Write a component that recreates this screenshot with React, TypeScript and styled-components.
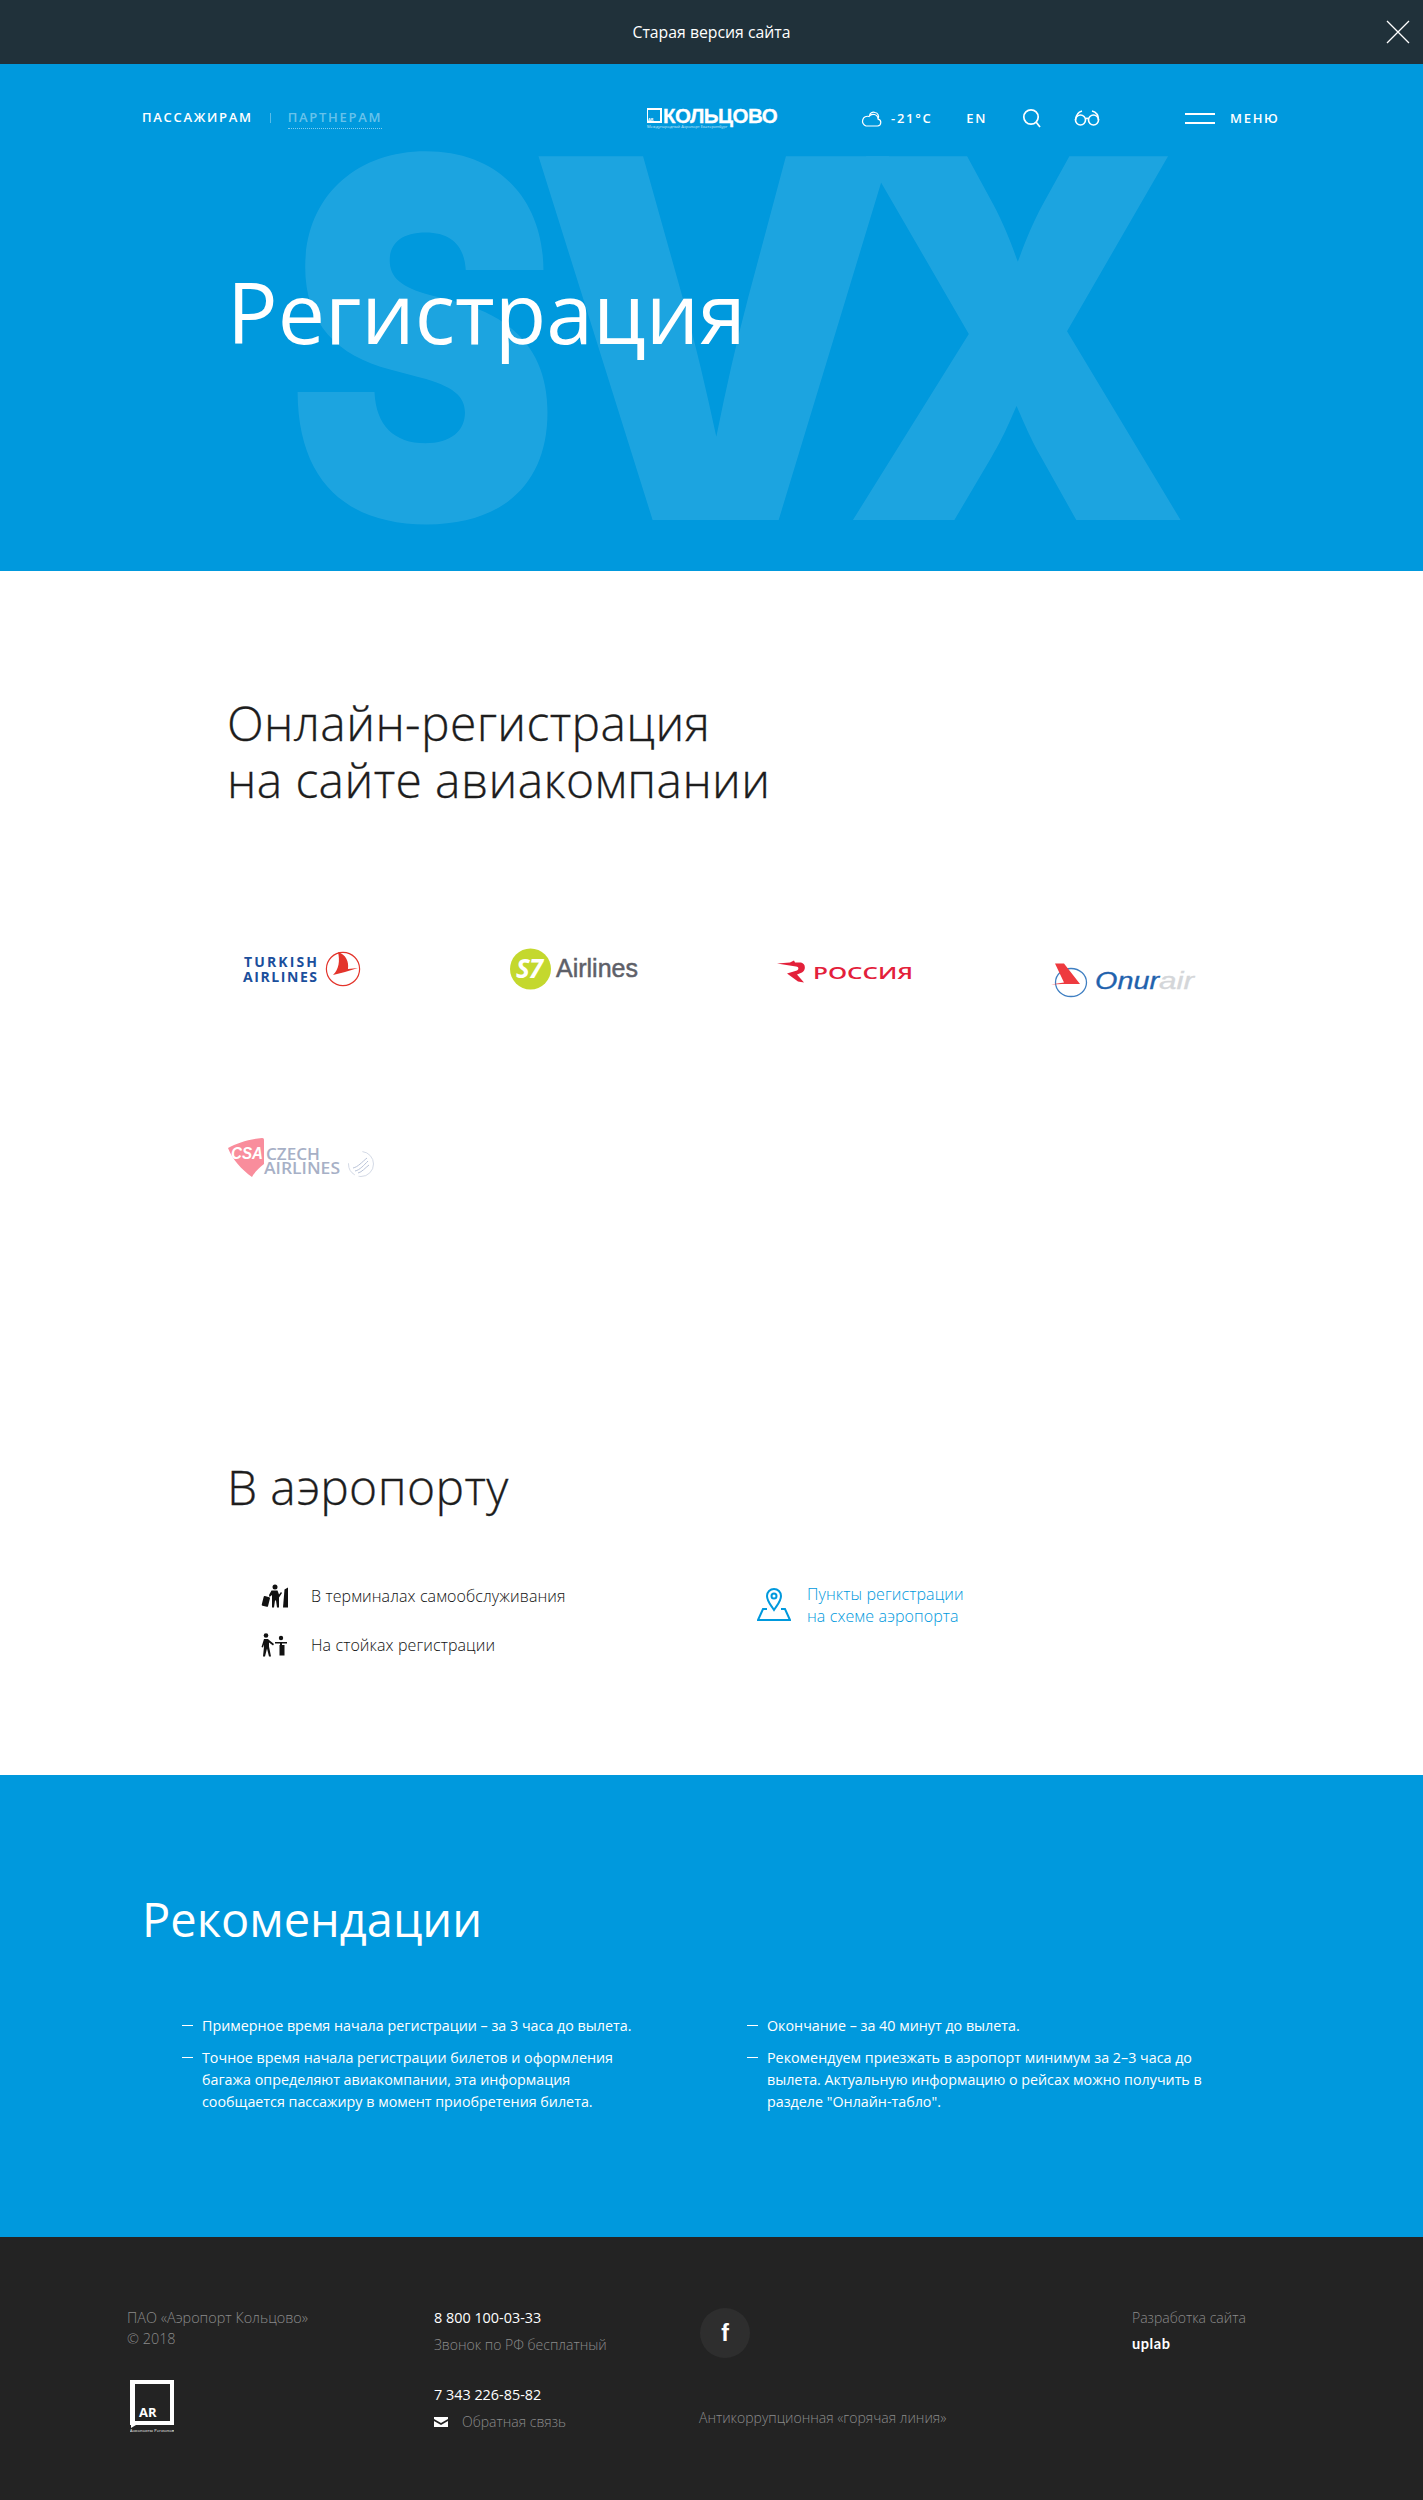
import React from "react";
import styled, { createGlobalStyle } from "styled-components";

const Global = createGlobalStyle`
  html, body { margin: 0; padding: 0; background: #fff; }
  body { font-family: "Open Sans", "Noto Sans", sans-serif; color: #1f1f1f; }
  * { box-sizing: border-box; }
`;

const Page = styled.div`
  width: 1423px;
  height: 2500px;
  overflow: hidden;
`;

const TopBar = styled.div`
  position: relative;
  height: 64px;
  background: #20313a;
  display: flex;
  align-items: center;
  justify-content: center;
  color: #fff;
  font-size: 15.8px;
  font-weight: 400;
`;

const CloseButton = styled.svg`
  position: absolute;
  right: 13px;
  top: 20px;
  width: 24px;
  height: 24px;
`;

const Hero = styled.section`
  position: relative;
  height: 507px;
  background: #0099dd;
  overflow: hidden;
  color: #fff;
`;

const Watermark = styled.div`
  position: absolute;
  inset: 0;
  opacity: 0.11;
`;

const WatermarkLetter = styled.span<{ $left: number; $scale: number }>`
  position: absolute;
  left: ${(p) => p.$left}px;
  top: 25px;
  font-family: "Inter", sans-serif;
  font-weight: 900;
  font-size: 500px;
  line-height: 500px;
  color: #fff;
  transform: scaleX(${(p) => p.$scale});
  transform-origin: left top;
`;

const Header = styled.header`
  position: relative;
  display: flex;
  align-items: center;
  height: 44px;
  margin-top: 32px;
  padding-left: 142px;
`;

const Nav = styled.nav`
  display: flex;
  align-items: center;
  width: 505px;
`;

const NavLink = styled.span<{ $muted?: boolean }>`
  font-size: 13px;
  font-weight: 600;
  letter-spacing: 1.7px;
  line-height: 20px;
  color: ${(p) => (p.$muted ? "rgba(255,255,255,.42)" : "#fff")};
  border-bottom: ${(p) => (p.$muted ? "1px dotted rgba(255,255,255,.5)" : "1px solid transparent")};
  padding-bottom: 1px;
`;

const NavDivider = styled.span`
  width: 1px;
  height: 10px;
  margin: 0 17px 0 17px;
  background: rgba(255, 255, 255, 0.35);
`;

const Logo = styled.div`
  position: relative;
  width: 214px;
  height: 22px;
  display: flex;
  align-items: flex-start;
`;

const LogoBox = styled.span`
  position: relative;
  width: 15px;
  height: 15px;
  border: 2px solid #fff;
  border-left-width: 1px;
  margin-top: 1px;
  margin-right: 1px;
  color: #fff;
  font-size: 4px;
  font-weight: 700;
  line-height: 20px;
`;

const LogoWord = styled.span`
  font-family: "Liberation Sans", sans-serif;
  font-weight: 700;
  font-size: 20.5px;
  line-height: 18px;
  letter-spacing: -0.5px;
  color: #fff;
  -webkit-text-stroke: 0.3px #fff;
`;

const LogoSub = styled.span`
  position: absolute;
  left: 0;
  top: 18px;
  font-size: 4px;
  line-height: 4px;
  color: rgba(255, 255, 255, 0.8);
  white-space: nowrap;
`;

const Tools = styled.div`
  display: flex;
  align-items: center;
  width: 324px;
`;

const ToolText = styled.span<{ $left?: number }>`
  font-size: 13px;
  font-weight: 600;
  letter-spacing: 1.7px;
  color: #fff;
  margin-left: ${(p) => p.$left ?? 0}px;
`;

const ToolIcon = styled.svg<{ $left?: number }>`
  display: block;
  margin-left: ${(p) => p.$left ?? 0}px;
  flex: none;
`;

const Burger = styled.span`
  width: 30px;
  height: 11px;
  border-top: 2px solid #fff;
  border-bottom: 2px solid #fff;
  margin-right: 15px;
`;

const Menu = styled.div`
  display: flex;
  align-items: center;
`;

const HeroTitle = styled.h1`
  position: relative;
  margin: 114px 0 0 227px;
  font-size: 84.2px;
  line-height: 116px;
  font-weight: 400;
  color: #fff;
`;

const Content = styled.section`
  height: 1204px;
  padding: 123px 0 0 227px;
  background: #fff;
`;

const Heading = styled.h2`
  margin: 0;
  font-size: 48px;
  line-height: 57px;
  font-weight: 300;
  color: #1d1d1d;
  letter-spacing: 0.4px;
  -webkit-text-stroke: 0.3px #1d1d1d;
`;

const LogoGrid = styled.div`
  display: grid;
  grid-template-columns: repeat(4, 275px);
  grid-auto-rows: 190px;
  margin-top: 130px;
  height: 520px;
`;

const AirlineLogo = styled.svg`
  display: block;
  width: 170px;
  height: 60px;
  overflow: visible;
`;

const Airport = styled.div`
  display: grid;
  grid-template-columns: 496px 1fr;
  padding-left: 34px;
  margin-top: 70px;
`;

const Options = styled.ul`
  list-style: none;
  margin: 0;
  padding: 0;
  display: flex;
  flex-direction: column;
  gap: 27px;
`;

const OptionRow = styled.li`
  display: flex;
  align-items: center;
  height: 22px;
  font-size: 16px;
  letter-spacing: 0.1px;
  font-weight: 300;
  color: #111;
`;

const OptionIcon = styled.svg`
  display: block;
  width: 28px;
  height: 24px;
  margin-right: 22px;
  flex: none;
  fill: #111;
`;

const MapLink = styled.a`
  display: flex;
  align-items: center;
  gap: 16px;
  font-size: 16px;
  letter-spacing: 0.1px;
  line-height: 22px;
  font-weight: 300;
  color: #0099dd;
  margin-top: -2px;
  height: 44px;
`;

const Recommend = styled.section`
  height: 462px;
  background: #0099dd;
  color: #fff;
  padding: 111px 0 0 142px;
`;

const RecommendTitle = styled.h2`
  margin: 0;
  font-size: 47px;
  line-height: 66px;
  font-weight: 400;
`;

const RecommendColumns = styled.div`
  display: grid;
  grid-template-columns: 565px 480px;
  margin-top: 63px;
  padding-left: 40px;
`;

const Tips = styled.ul`
  list-style: none;
  margin: 0;
  padding: 0;
  display: flex;
  flex-direction: column;
  gap: 10px;
`;

const Tip = styled.li`
  position: relative;
  padding-left: 20px;
  font-size: 14.3px;
  line-height: 22px;
  &::before {
    content: "";
    position: absolute;
    left: 0;
    top: 10px;
    width: 11px;
    height: 1px;
    background: #fff;
  }
`;

const Footer = styled.footer`
  height: 263px;
  background: #232323;
  display: grid;
  grid-template-columns: 307px 265px 433px 1fr;
  padding: 70px 0 0 127px;
  font-size: 14px;
  color: #8b8b8b;
`;

const FooterColumn = styled.div`
  display: flex;
  flex-direction: column;
  align-items: flex-start;
`;

const FooterText = styled.div<{ $top?: number; $light?: boolean; $wide?: boolean }>`
  line-height: 21px;
  margin-top: ${(p) => p.$top ?? 0}px;
  color: ${(p) => (p.$light ? "#fff" : "#8b8b8b")};
  font-weight: ${(p) => (p.$light ? 400 : 300)};
  font-size: ${(p) => (p.$light || p.$wide ? 14.4 : 14)}px;
  display: flex;
  align-items: center;
  white-space: nowrap;
`;

const ArMark = styled.svg`
  display: block;
  margin: 31px 0 0 3px;
`;

const Social = styled.div`
  width: 50px;
  height: 50px;
  margin: 1px 0 0 1px;
  border-radius: 50%;
  background: #2e2e2e;
  display: flex;
  align-items: center;
  justify-content: center;
  color: #fff;
  font-family: "Liberation Sans", sans-serif;
  font-weight: 700;
  font-size: 23px;
`;

const Uplab = styled.div`
  margin-top: 6px;
  color: #fff;
  font-family: "Lato", sans-serif;
  font-size: 14.5px;
  font-weight: 700;
  line-height: 20px;
  letter-spacing: 0.6px;
`;

const Envelope = styled.svg`
  display: block;
  margin-right: 14px;
`;

function Turkish() {
  return (
    <AirlineLogo viewBox="0 0 170 60">
      <g fontFamily="'Open Sans', sans-serif" fontWeight="700" fontSize="14" fill="#1b4f9c">
        <text x="17" y="29" textLength="73">TURKISH</text>
        <text x="16" y="44" textLength="74">AIRLINES</text>
      </g>
      <circle cx="116" cy="31" r="16.6" fill="none" stroke="#e3342b" strokeWidth="1.2" />
      <path d="M111 14c8 3 11 9 10 17l10-1-13 4-12 3c6-6 7-14 5-23z" fill="#e3342b" />
    </AirlineLogo>
  );
}

function S7() {
  return (
    <AirlineLogo viewBox="0 0 170 60">
      <circle cx="28.500" cy="31" r="20.500" fill="#c4d82e" />
      <text x="14" y="40" fontFamily="'Open Sans', sans-serif" fontStyle="italic" fontWeight="700" fontSize="26" fill="#fff" letterSpacing="-1">S7</text>
      <text x="54" y="39" fontFamily="'Liberation Sans', sans-serif" fontSize="26" fill="#5e6068" stroke="#5e6068" strokeWidth="0.5" textLength="82" lengthAdjust="spacingAndGlyphs">Airlines</text>
    </AirlineLogo>
  );
}

function Rossiya() {
  return (
    <AirlineLogo viewBox="0 0 170 60">
      <path d="M0 25.500l13-1 4-2 1 2h6c5 1 5 8 1 10l-5 2 7 8-6-1-11-8 10-3c2-1 2-4-1-4L0 25.500z" fill="#e3203a" />
      <text x="36" y="40.500" fontFamily="'Open Sans', sans-serif" fontWeight="600" fontSize="17" fill="#e3203a" textLength="100" lengthAdjust="spacingAndGlyphs">РОССИЯ</text>
    </AirlineLogo>
  );
}

function Onur() {
  return (
    <AirlineLogo viewBox="0 0 170 60">
      <ellipse cx="19" cy="44.500" rx="15.500" ry="14" fill="none" stroke="#3f7fc2" strokeWidth="1.300" />
      <path d="M3 25.500h9L28 46H10L-1 46.500l13-2z" fill="#ee3a3f" />
      <text x="43" y="50.500" fontFamily="'Liberation Sans', sans-serif" fontStyle="italic" fontSize="23.500" fill="#1f62ad" stroke="#1f62ad" strokeWidth="0.3" textLength="64" lengthAdjust="spacingAndGlyphs">Onur</text>
      <text x="107" y="50.500" fontFamily="'Liberation Sans', sans-serif" fontStyle="italic" fontSize="23.500" fill="#d4d6d9" stroke="#d4d6d9" strokeWidth="0.3" textLength="35" lengthAdjust="spacingAndGlyphs">air</text>
    </AirlineLogo>
  );
}

function Czech() {
  return (
    <AirlineLogo viewBox="0 0 170 60">
      <path d="M1 20c9-5 21-9 34-10 2 0 2 1 2 3v23c-5 4-10 9-12 13C15 42 5 31 1 20z" fill="#f98d9c" />
      <text x="4" y="31" fontFamily="'Liberation Sans', sans-serif" fontStyle="italic" fontWeight="700" fontSize="17" fill="#fff" textLength="32" lengthAdjust="spacingAndGlyphs">CSA</text>
      <g fontFamily="'Open Sans', sans-serif" fontWeight="600" fill="#a7b0c6">
        <text x="39" y="32" fontSize="16.500" textLength="54" lengthAdjust="spacingAndGlyphs">CZECH</text>
        <text x="37" y="46" fontSize="15.500" textLength="76" lengthAdjust="spacingAndGlyphs">AIRLINES</text>
      </g>
      <circle cx="134" cy="36" r="12.500" fill="none" stroke="#d4dae6" strokeWidth="1" strokeDasharray="22 4 14 20" />
      <path d="M126 40c5-1 9-6 14-10M128 43c5-1 9-6 13-10M131 45c4-1 7-5 11-8" fill="none" stroke="#b9c3d8" strokeWidth="1" />
    </AirlineLogo>
  );
}

export default function App() {
  return (
    <Page>
      <Global />
      <TopBar>
        Старая версия сайта
        <CloseButton viewBox="0 0 24 24">
          <path d="M1 1l22 22M23 1L1 23" stroke="#fff" strokeWidth="1.300" fill="none" />
        </CloseButton>
      </TopBar>

      <Hero>
        <Watermark>
          <WatermarkLetter $left={286} $scale={0.82}>S</WatermarkLetter>
          <WatermarkLetter $left={528} $scale={0.935}>V</WatermarkLetter>
          <WatermarkLetter $left={843} $scale={0.884}>X</WatermarkLetter>
        </Watermark>
        <Header>
          <Nav>
            <NavLink>ПАССАЖИРАМ</NavLink>
            <NavDivider />
            <NavLink $muted>ПАРТНЕРАМ</NavLink>
          </Nav>
          <Logo>
            <LogoBox>AR</LogoBox>
            <LogoWord>КОЛЬЦОВО</LogoWord>
            <LogoSub>Международный Аэропорт Екатеринбург</LogoSub>
          </Logo>
          <Tools>
            <ToolIcon width="21" height="17" viewBox="0 0 21 17" fill="none" stroke="#fff" strokeWidth="1.200">
              <path d="M5 16h11.500a3.500 3.500 0 0 0 .6-6.900A5 5 0 0 0 8 6.500a4.600 4.600 0 0 0-3 9.500z" />
              <path d="M8.500 6A4 4 0 0 1 14 2.500a4 4 0 0 1 3 6" />
            </ToolIcon>
            <ToolText $left={9}>-21°C</ToolText>
            <ToolText $left={34}>EN</ToolText>
            <ToolIcon $left={35} width="20" height="20" viewBox="0 0 20 20" fill="none" stroke="#fff" strokeWidth="1.700">
              <circle cx="9" cy="9" r="7.200" />
              <path d="M14 14l4 5" />
            </ToolIcon>
            <ToolIcon $left={32} width="26" height="16" viewBox="0 0 26 16" fill="none" stroke="#fff" strokeWidth="1.600">
              <circle cx="6.500" cy="10" r="5" />
              <circle cx="19.500" cy="10" r="5" />
              <path d="M1.500 10C2 5 4 2 8 1M24.500 10C24.500 5 22 2 18 1M11.500 9c1-1 2-1 3 0" />
            </ToolIcon>
          </Tools>
          <Menu>
            <Burger />
            <ToolText>МЕНЮ</ToolText>
          </Menu>
        </Header>
        <HeroTitle>Регистрация</HeroTitle>
      </Hero>

      <Content>
        <Heading>
          Онлайн-регистрация
          <br />
          на сайте авиакомпании
        </Heading>
        <LogoGrid>
          <Turkish />
          <S7 />
          <Rossiya />
          <Onur />
          <Czech />
        </LogoGrid>
        <Heading>В аэропорту</Heading>
        <Airport>
          <Options>
            <OptionRow>
              <OptionIcon viewBox="0 0 28 24">
                <circle cx="14" cy="3" r="2.500" />
                <path d="M10.500 6.500h6l1.500 4 2-2.500 1 1-3 4.500v10h-2l-1-7h-1l-1 7h-2V11L8.500 13 8 11z" />
                <rect x="1.500" y="12.500" width="6.500" height="10" rx="1" transform="rotate(14 5 18)" />
                <path d="M23.500 5.500L27 3.500v20h-5z" />
              </OptionIcon>
              В терминалах самообслуживания
            </OptionRow>
            <OptionRow>
              <OptionIcon viewBox="0 0 28 24">
                <circle cx="5" cy="2.500" r="2.300" />
                <path d="M3 6h4l1 1 5 4-1 1.500-4-3v4l2 10h-2l-2-8-2 8H2l1-10v-2l-1 3-1.500-.5z" />
                <circle cx="20" cy="5" r="2.200" />
                <path d="M14 9h12v1.600h-5V12h2.500v10.500h-5V12H19v-1.400h-5z" />
              </OptionIcon>
              На стойках регистрации
            </OptionRow>
          </Options>
          <MapLink>
            <svg width="34" height="34" viewBox="0 0 34 34" fill="none" stroke="#0099dd" strokeWidth="2">
              <path d="M17 22c-4-6-7-9-7-14a7 7 0 0 1 14 0c0 5-3 8-7 14z" />
              <circle cx="17" cy="8" r="2.500" />
              <path d="M10 21H6L1 32h32l-5-11h-4" />
            </svg>
            <span>
              Пункты регистрации
              <br />
              на схеме аэропорта
            </span>
          </MapLink>
        </Airport>
      </Content>

      <Recommend>
        <RecommendTitle>Рекомендации</RecommendTitle>
        <RecommendColumns>
          <Tips>
            <Tip>Примерное время начала регистрации – за 3 часа до вылета.</Tip>
            <Tip>
              Точное время начала регистрации билетов и оформления
              <br />
              багажа определяют авиакомпании, эта информация
              <br />
              сообщается пассажиру в момент приобретения билета.
            </Tip>
          </Tips>
          <Tips>
            <Tip>Окончание – за 40 минут до вылета.</Tip>
            <Tip>
              Рекомендуем приезжать в аэропорт минимум за 2–3 часа до
              <br />
              вылета. Актуальную информацию о рейсах можно получить в
              <br />
              разделе "Онлайн-табло".
            </Tip>
          </Tips>
        </RecommendColumns>
      </Recommend>

      <Footer>
        <FooterColumn>
          <FooterText $wide>ПАО «Аэропорт Кольцово»</FooterText>
          <FooterText $wide>© 2018</FooterText>
          <ArMark width="44" height="52" viewBox="0 0 44 52">
            <path d="M0 0h44v45H6l-5 3v-3H0z" fill="#fff" />
            <path d="M5 4h35v37H5z" fill="#232323" />
            <text x="9" y="37" fontFamily="'Open Sans', sans-serif" fontWeight="700" fontSize="13" fill="#fff">AR</text>
            <text x="0" y="52" fontFamily="'Open Sans', sans-serif" fontSize="4" fill="#fff" textLength="44">Аэропорты Регионов</text>
          </ArMark>
        </FooterColumn>
        <FooterColumn>
          <FooterText $light>8 800 100-03-33</FooterText>
          <FooterText $top={6}>Звонок по РФ бесплатный</FooterText>
          <FooterText $light $top={29}>7 343 226-85-82</FooterText>
          <FooterText $top={6}>
            <Envelope width="14" height="10" viewBox="0 0 14 10">
              <path d="M0 0h14v2L7 6 0 2zM0 4l7 4 7-4v6H0z" fill="#fff" />
            </Envelope>
            Обратная связь
          </FooterText>
        </FooterColumn>
        <FooterColumn>
          <Social>f</Social>
          <FooterText $top={49}>Антикоррупционная «горячая линия»</FooterText>
        </FooterColumn>
        <FooterColumn>
          <FooterText>Разработка сайта</FooterText>
          <Uplab>uplab</Uplab>
        </FooterColumn>
      </Footer>
    </Page>
  );
}
